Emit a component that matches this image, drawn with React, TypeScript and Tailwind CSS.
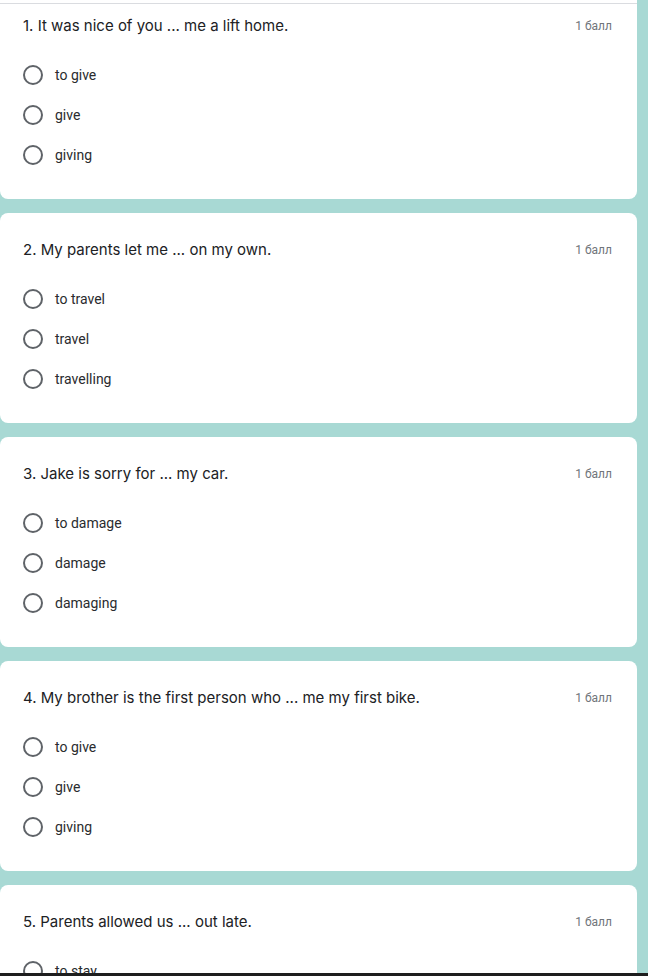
import React from "react";

interface Question {
  id: number;
  text: string;
  options: string[];
}

const questions: Question[] = [
  { id: 1, text: "1. It was nice of you ... me a lift home.", options: ["to give", "give", "giving"] },
  { id: 2, text: "2. My parents let me ... on my own.", options: ["to travel", "travel", "travelling"] },
  { id: 3, text: "3. Jake is sorry for ... my car.", options: ["to damage", "damage", "damaging"] },
  { id: 4, text: "4. My brother is the first person who ... me my first bike.", options: ["to give", "give", "giving"] },
  { id: 5, text: "5. Parents allowed us ... out late.", options: ["to stay", "stay", "staying"] },
];

const QuestionCard: React.FC<{ q: Question; first?: boolean }> = ({ q, first }) => (
  <div
    className={`bg-white w-[637px] shrink-0 pl-[23px] pr-[25px] ${
      first ? "rounded-b-lg h-[195px] pt-[12px]" : "rounded-lg h-[210px] pt-[27px]"
    }`}
  >
    <div className="flex justify-between items-center h-[20px]">
      <span className="text-[15px] text-[#202124] font-['Inter',sans-serif]">{q.text}</span>
      <span className="text-[12px] text-[#70757a] font-['Roboto',sans-serif]">1 балл</span>
    </div>
    <div className="mt-[29px] flex flex-col gap-[20px]">
      {q.options.map((opt) => (
        <label key={opt} className="flex items-center h-[20px]">
          <span className="w-[20px] h-[20px] rounded-full border-2 border-[#5f6368] shrink-0" />
          <span className="ml-[12px] text-[14px] text-[#2a2b2e] font-['Roboto',sans-serif]">{opt}</span>
        </label>
      ))}
    </div>
  </div>
);

const App: React.FC = () => {
  return (
    <div className="w-[648px] h-[976px] overflow-hidden bg-[#a8d9d4] flex flex-col relative">
      <div className="h-[3px] w-[637px] bg-white shrink-0" />
      <div className="h-px w-[637px] bg-[#dadce0] shrink-0" />
      <div className="flex flex-col gap-[14px]">
        {questions.map((q, i) => (
          <QuestionCard key={q.id} q={q} first={i === 0} />
        ))}
      </div>
      <div className="absolute left-0 bottom-0 w-full h-[3px] bg-[#1e1e1e]" />
    </div>
  );
};

export default App;
